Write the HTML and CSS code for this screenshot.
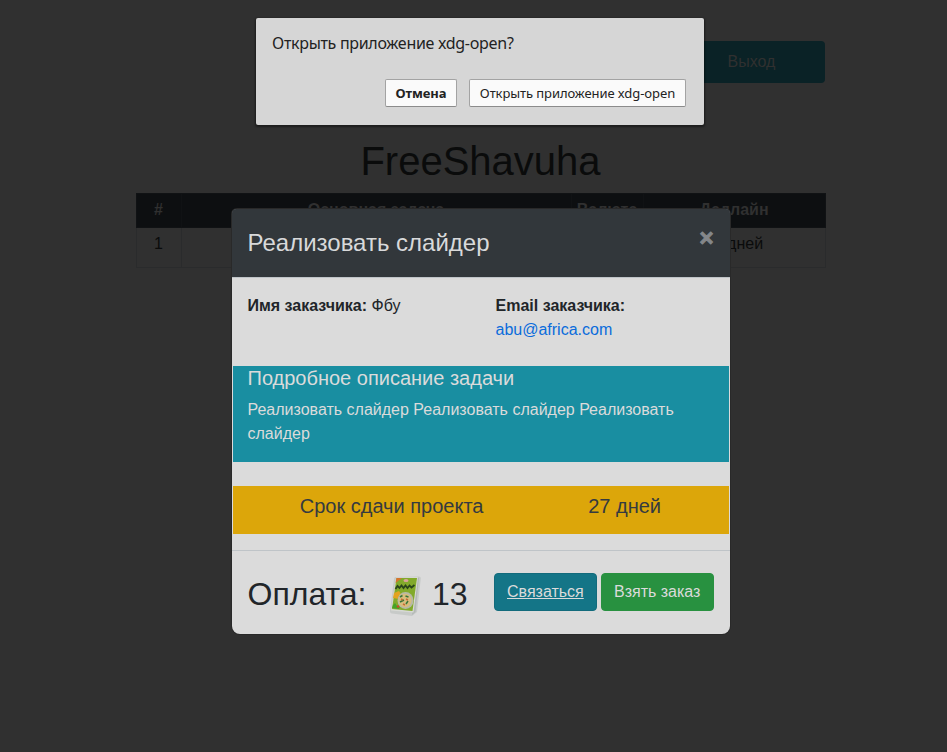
FILE: index.html
```html
<!DOCTYPE html>
<html lang="ru">
<head>
<meta charset="utf-8">
<title>FreeShavuha</title>
<link rel="stylesheet" href="styles.css">
</head>
<body>
<main class="page">
  <header class="topbar"><a class="logout">Выход</a></header>
  <h1>FreeShavuha</h1>
  <table class="tasks">
    <colgroup><col class="c-num"><col class="c-task"><col class="c-cur"><col class="c-dead"></colgroup>
    <thead><tr><th>#</th><th>Основная задача</th><th>Валюта</th><th>Дедлайн</th></tr></thead>
    <tbody><tr><td>1</td><td></td><td></td><td>27 дней</td></tr></tbody>
  </table>
</main>

<section class="modal">
  <div class="modal-header">
    <h4>Реализовать слайдер</h4>
    <span class="close">×</span>
  </div>
  <div class="contacts">
    <p><b>Имя заказчика:</b> Фбу</p>
    <p><b>Email заказчика:</b><br><a class="mail">abu@africa.com</a></p>
  </div>
  <div class="details">
    <h5>Подробное описание задачи</h5>
    <p>Реализовать слайдер Реализовать слайдер Реализовать слайдер</p>
  </div>
  <div class="deadline"><h5>Срок сдачи проекта</h5><h5>27 дней</h5></div>
  <div class="modal-footer">
    <h2>Оплата:</h2>
    <svg class="pack" viewBox="0 0 34 42" width="34" height="42">
      <path d="M8 2 31 1.500q2 0 1.800 2L29 37l-5 4L4 38.500q-2.500-.5-2-3L6 4q.2-2 2-2z" fill="#c7cac8"/>
      <path d="M31 2.500 27.500 37 24 40 28 4z" fill="#b3b8b6"/>
      <path d="M8 2.500 30 2 25.500 37.500 3 35.500z" fill="#d8dad5"/>
      <path d="M8.500 3 29 3 24.500 36 4 34z" fill="#82aa2b"/>
      <path d="M8.500 3 14 3 7.500 8z" fill="#d6732d"/>
      <ellipse cx="18" cy="5.500" rx="2.500" ry="1.500" fill="#dba49b"/>
      <path d="m7.500 14 2-3 2 2 2-2.500 2 2.500 2-2.500 2 2.500 2-2.500 2 2 3-2.500" fill="none" stroke="#29451a" stroke-width="1.800"/>
      <path d="M6 18 11 16 14 21 11 24 5 23z" fill="#e3a321"/>
      <ellipse cx="17.500" cy="25.500" rx="8" ry="8.500" fill="#b7b9a5"/>
      <ellipse cx="17" cy="25.500" rx="6.500" ry="6.800" fill="#d7bd7c"/>
      <path d="m12 22 2.500-1.500m3 .5 3 1m-8.500 5 4-2m2 4 2-3" fill="none" stroke="#38763a" stroke-width="1.500"/>
      <path d="m13 24 2 1m3-1 2 1m-5 4 2 1" fill="none" stroke="#c76b35" stroke-width="1.500"/>
      <path d="m5 30 2-2 2 3 3 1-1 2-7-1z" fill="#45a326"/>
      <path d="m9 31 2 1" stroke="#ce4528" stroke-width="2"/>
    </svg>
    <h2 class="amount">13</h2>
    <a class="btn contact">Связаться</a>
    <a class="btn take">Взять заказ</a>
  </div>
</section>

<section class="dialog">
  <p>Открыть приложение xdg-open?</p>
  <div class="dialog-actions">
    <span class="dbtn cancel">Отмена</span>
    <span class="dbtn open">Открыть приложение xdg-open</span>
  </div>
</section>
</body>
</html>
```
FILE: styles.css
```css
* { box-sizing: border-box; }
html, body { height: 100%; overflow: hidden; }
body {
  margin: 0;
  background: #303030;
  color: #0a0b0b;
  font: 16px/24px "Liberation Sans", Arial, sans-serif;
}
h1, h2, h4, h5, p { margin: 0; font-weight: 400; }

.page { width: 690px; margin-left: 136px; padding-top: 41px; }
.topbar { display: flex; justify-content: flex-end; height: 42px; }
.logout {
  width: 147px;
  line-height: 42px;
  text-align: center;
  background: #0a2226;
  color: #303030;
  border-radius: 4px;
  margin-right: 1px;
}
h1 { font-size: 40px; line-height: 48px; text-align: center; margin: 54px 0 8px; padding-right: 1px; }
.tasks { width: 690px; table-layout: fixed; border-collapse: collapse; text-align: center; }
.c-num { width: 45px; }
.c-task { width: 390px; }
.c-cur { width: 72px; }
.tasks th { height: 34px; padding: 0 1px 1px 0; background: #0d0f11; color: #303030; border: 1px solid #101214; }
.tasks td { height: 40px; padding: 4px 1px 4px 0; vertical-align: top; border: 1px solid #2a2b2c; }

.modal {
  position: absolute;
  left: 232px;
  top: 209px;
  width: 498px;
  height: 425px;
  background: #dbdbdb;
  color: #212529;
  border-radius: 5px 5px 8px 8px;
  box-shadow: 0 0 0 1px #292929;
}
.modal-header {
  display: flex;
  justify-content: space-between;
  height: 69px;
  padding: 16px 16.500px 16px 15.500px;
  background: #32373b;
  border-bottom: 1px solid #bfc4c8;
  border-radius: 4px 4px 0 0;
  color: #d8d9da;
}
.modal-header h4 { font-size: 24px; line-height: 36px; }
.close { font-size: 24px; font-weight: 700; line-height: 25px; color: #84878a; -webkit-text-stroke: 1px #84878a; }
.contacts { display: grid; grid-template-columns: 248px 1fr; padding: 16px 16px 24px 15.500px; }
.mail { color: #0a6cdb; }
.details { margin: 0 1px 24px; padding: 0 15px 16px 14.500px; height: 96px; background: #198ea1; color: #dbdbdb; }
h5 { font-size: 20px; line-height: 24px; }
.details h5 { margin-bottom: 8px; }
.deadline {
  display: grid;
  grid-template-columns: 317px 134px;
  justify-content: start;
  margin: 0 1px 16px;
  padding: 8px 0;
  height: 48px;
  background: #dca60a;
  color: #343a40;
  text-align: right;
}
.deadline h5:first-child { padding-right: 66.500px; }
.deadline h5:last-child { padding-right: 23px; }
.modal-footer { display: flex; align-items: center; height: 84px; border-top: 1px solid #bfc4c8; padding: 0 16px 0 15.500px; }
h2 { font-size: 32px; line-height: 40px; padding-top: 2px; }
.pack { margin-left: 21.500px; margin-top: 7px; }
.amount { margin-left: 10px; }
.btn { height: 38px; line-height: 36px; padding: 0 12px; margin-bottom: 2px; border-radius: 4px; color: #dbdbdb; border: 1px solid; }
.contact { margin-left: auto; width: 103px; background: #147587; border-color: #126b7c; text-decoration: underline; }
.take { margin-left: 4px; width: 113px; background: #289140; border-color: #289140; }

.dialog {
  position: absolute;
  left: 256px;
  top: 18px;
  width: 448px;
  height: 107px;
  padding: 13px 18px 0 16px;
  background: #d6d6d6;
  border-radius: 2px;
  box-shadow: 0 1px 2px 1px rgba(0, 0, 0, .4);
  color: #222;
  font-family: "Noto Sans", sans-serif;
}
.dialog p { font-size: 16px; letter-spacing: -.3px; white-space: nowrap; }
.dialog-actions { display: flex; justify-content: flex-end; gap: 12px; margin-top: 24px; }
.dbtn {
  height: 28px;
  line-height: 26px;
  font-size: 13px;
  letter-spacing: -.08px;
  text-align: center;
  white-space: nowrap;
  background: #fafafa;
  border: 1px solid #a3a3a3;
  border-bottom-color: #8b8b8b;
  border-radius: 2px;
}
.cancel { width: 72px; font-weight: 700; }
.open { width: 217px; }
```
